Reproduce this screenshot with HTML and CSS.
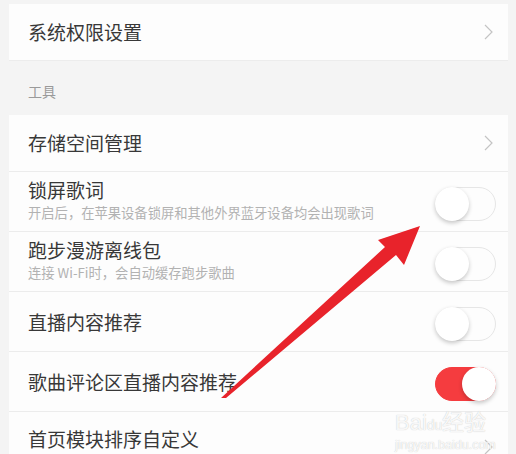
FILE: index.html
```html
<!DOCTYPE html>
<html lang="zh-CN">
<head>
    <meta charset="UTF-8">
    <meta name="viewport" content="width=device-width, initial-scale=1.0">
    <title>设置</title>
    <link rel="stylesheet" href="styles.css">
</head>
<body>
    <div class="page">
        <div class="group">
            <div class="row row-link">
                <span class="title">系统权限设置</span>
                <svg class="chevron" width="10" height="16" viewBox="0 0 10 16"><path d="M1 1 L8 8 L1 15" fill="none" stroke="#c4c4c4" stroke-width="1.2"/></svg>
            </div>
        </div>

        <div class="section-label">工具</div>

        <div class="group">
            <div class="row row-link">
                <span class="title">存储空间管理</span>
                <svg class="chevron" width="10" height="16" viewBox="0 0 10 16"><path d="M1 1 L8 8 L1 15" fill="none" stroke="#c4c4c4" stroke-width="1.2"/></svg>
            </div>
            <div class="row row-tall">
                <div class="text">
                    <span class="title">锁屏歌词</span>
                    <span class="sub">开启后，在苹果设备锁屏和其他外界蓝牙设备均会出现歌词</span>
                </div>
                <div class="toggle"><div class="knob"></div></div>
            </div>
            <div class="row row-tall">
                <div class="text">
                    <span class="title">跑步漫游离线包</span>
                    <span class="sub">连接 Wi-Fi时，会自动缓存跑步歌曲</span>
                </div>
                <div class="toggle"><div class="knob"></div></div>
            </div>
            <div class="row row-tall">
                <span class="title">直播内容推荐</span>
                <div class="toggle"><div class="knob"></div></div>
            </div>
            <div class="row row-tall">
                <span class="title">歌曲评论区直播内容推荐</span>
                <div class="toggle is-on"><div class="knob"></div></div>
            </div>
            <div class="row row-last">
                <span class="title">首页模块排序自定义</span>
                <svg class="chevron chevron-low" width="10" height="16" viewBox="0 0 10 16"><path d="M1 1 L8 8 L1 15" fill="none" stroke="#c4c4c4" stroke-width="1.2"/></svg>
            </div>
        </div>
    </div>

    <div class="watermark">
        <span class="wm-big">Bai<span class="wm-du">du</span>经验</span>
        <span class="wm-small">jingyan.baidu.com</span>
    </div>

    <svg class="arrow" width="516" height="454" viewBox="0 0 516 454">
        <polygon points="221,398 385,247 378,240 420,226 404,265 396,255 226,398" fill="#e8232b"/>
    </svg>
</body>
</html>
```

FILE: styles.css
```css
body{
    margin: 0;
    background-color: #f4f4f4;
    font-family: "Noto Sans CJK SC", "Noto Sans", sans-serif;
    overflow: hidden;
}

.page{
    margin: 0 8px 0 9px;
    padding-top: 4px;
}

.group{
    background-color: #fdfdfd;
}

.row{
    display: flex;
    align-items: center;
    justify-content: space-between;
    padding: 0 12px 0 19px;
    border-bottom: 1px solid #ececec;
}

.row-link{
    height: 56px;
}

.row-tall{
    height: 59px;
}

.row-last{
    height: 60px;
    border-bottom: none;
    align-items: flex-start;
    padding-top: 15px;
    box-sizing: border-box;
}

.text{
    display: flex;
    flex-direction: column;
    margin-top: -3px;
}

.title{
    font-size: 19px;
    color: #383838;
    line-height: 24px;
}

.sub{
    font-size: 13.3px;
    color: #b2b2b2;
    line-height: 18px;
    margin-top: 2px;
}

.section-label{
    height: 54px;
    box-sizing: border-box;
    padding: 20px 0 0 19px;
    font-size: 14px;
    color: #9a9a9a;
}

.chevron{
    margin-right: 2px;
}

.chevron-low{
    margin-top: 12px;
}

.toggle{
    width: 61px;
    height: 34px;
    border-radius: 17px;
    border: 1px solid #e6e6e6;
    background-color: #fdfdfd;
    box-sizing: border-box;
    position: relative;
    margin-top: 4px;
}

.knob{
    position: absolute;
    left: -1px;
    top: -1px;
    width: 34px;
    height: 34px;
    border-radius: 50%;
    background-color: #ffffff;
    box-shadow: 0 2px 4px rgba(0, 0, 0, 0.22);
}

.is-on{
    background-color: #f53c3f;
    border-color: #f53c3f;
}

.is-on .knob{
    left: auto;
    right: -1px;
}

.watermark{
    position: absolute;
    left: 395px;
    top: 411px;
    display: flex;
    flex-direction: column;
    color: rgba(255, 255, 255, 0.9);
    text-shadow: 0 0 1px #bdbdbd;
}

.wm-big{
    font-family: "Liberation Sans", sans-serif;
    font-size: 22px;
    line-height: 24px;
}

.wm-du{
    font-size: 14px;
}

.wm-small{
    font-family: "Liberation Sans", sans-serif;
    font-size: 12.5px;
    line-height: 16px;
}

.arrow{
    position: absolute;
    left: 0;
    top: 0;
}
```
